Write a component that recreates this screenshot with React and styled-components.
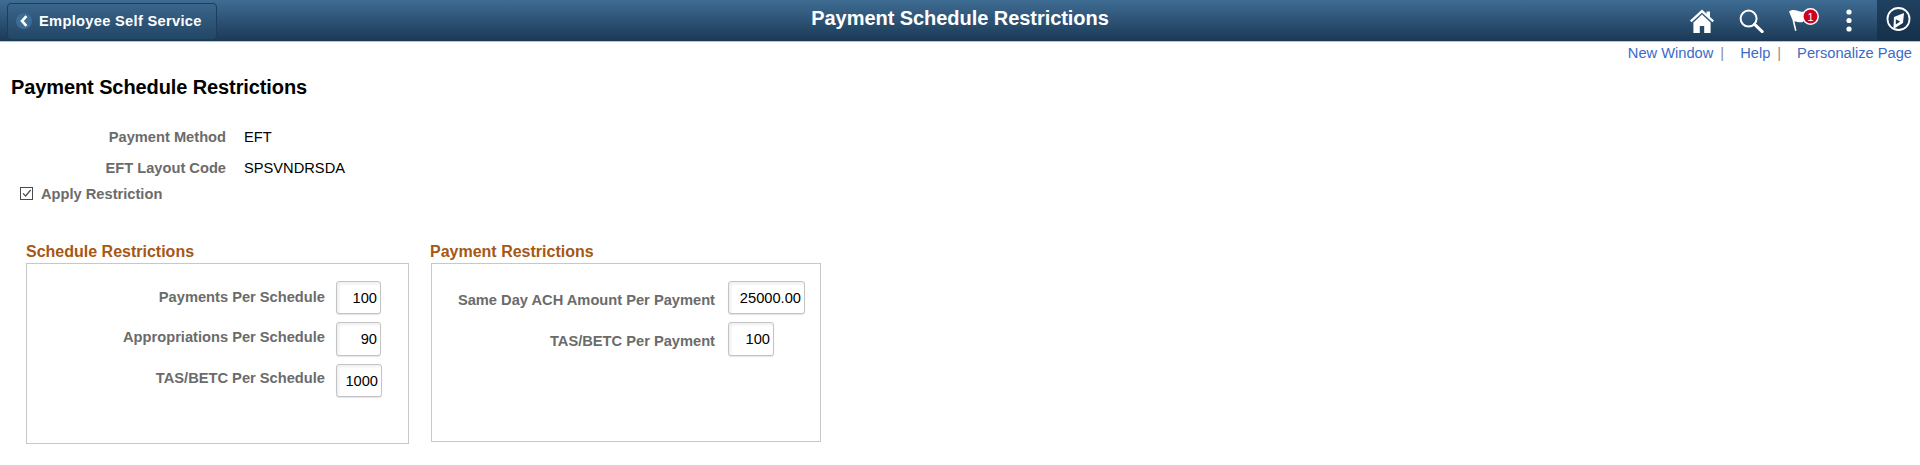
import React from "react";
import styled, { createGlobalStyle } from "styled-components";

const GlobalStyle = createGlobalStyle`
  html, body {
    margin: 0;
    padding: 0;
    background: #fff;
    font-family: "Liberation Sans", Arial, sans-serif;
  }
`;

const Banner = styled.header`
  display: flex;
  align-items: stretch;
  justify-content: space-between;
  position: relative;
  height: 41px;
  box-sizing: content-box;
  background: linear-gradient(#3f6c93, #1b3956);
  border-bottom: 1px solid #a9c6dc;
`;

const BackButton = styled.div`
  display: flex;
  align-items: center;
  box-sizing: border-box;
  width: 210px;
  height: 37px;
  margin: 3px 0 0 7px;
  padding: 0 0 2px 8px;
  gap: 7px;
  color: #fff;
  font-size: 14.67px;
  font-weight: 700;
  letter-spacing: 0.3px;
  border: 1px solid #1d3d5a;
  border-radius: 4px;
  background: linear-gradient(#3a658b, #234665);
`;

const BackBullet = styled.span`
  display: flex;
  align-items: center;
  justify-content: center;
  width: 16px;
  height: 16px;
  border-radius: 50%;
  background: #3c6d96;
`;

const BannerTitle = styled.div`
  position: absolute;
  left: 0;
  right: 0;
  top: 7px;
  text-align: center;
  color: #fff;
  font-size: 20px;
  font-weight: 700;
  line-height: 23px;
  letter-spacing: -0.05px;
  pointer-events: none;
`;

const BannerIcons = styled.div`
  display: flex;
  align-items: flex-start;
`;

const IconSlot = styled.span`
  display: block;
  box-sizing: border-box;
  width: ${(p) => p.$width}px;
  height: 41px;
  padding-top: ${(p) => p.$top}px;
`;

const NavBarButton = styled.span`
  display: block;
  width: 43px;
  height: 41px;
  border-radius: 0 0 0 4px;
  background: linear-gradient(#1f4160, #15304a);
`;

const TopLinks = styled.nav`
  display: flex;
  justify-content: flex-end;
  height: 22px;
  padding: 1px 8px 0 0;
  font-size: 14.67px;
  line-height: 21px;
  color: #3a6bc9;
`;

const TopLink = styled.a`
  color: #3a6bc9;
  margin-left: ${(p) => p.$gap}px;
`;

const Pipe = styled.span`
  color: #8d8d8d;
  margin-left: 7px;
`;

const Content = styled.main`
  padding: 11px 0 0 11px;
`;

const PageTitle = styled.h1`
  margin: 0;
  font-size: 20px;
  line-height: 23px;
  font-weight: 700;
  letter-spacing: -0.1px;
  color: #000;
`;

const InfoList = styled.div`
  margin-top: 30px;
`;

const InfoRow = styled.div`
  display: flex;
  height: 31px;
  font-size: 14.67px;
  line-height: 17px;
`;

const InfoLabel = styled.span`
  width: 215px;
  text-align: right;
  font-weight: 700;
  color: #6b6b6b;
`;

const InfoValue = styled.span`
  margin-left: 18px;
  color: #000;
`;

const ApplyRow = styled.label`
  display: flex;
  align-items: center;
  gap: 8px;
  margin: -6px 0 0 9px;
  height: 17px;
  font-size: 14.67px;
  font-weight: 700;
  color: #6b6b6b;
`;

const CheckBox = styled.span`
  display: flex;
  width: 13px;
  height: 13px;
`;

const Groups = styled.div`
  display: flex;
  align-items: flex-start;
  margin: 41px 0 0 15px;
`;

const Group = styled.section`
  width: ${(p) => p.$width}px;
  margin-right: ${(p) => p.$gap || 0}px;
`;

const GroupTitle = styled.h2`
  margin: 0 0 2px ${(p) => p.$shift || 0}px;
  font-size: 16px;
  line-height: 18px;
  font-weight: 700;
  color: #a65714;
`;

const GroupBox = styled.div`
  box-sizing: border-box;
  height: ${(p) => p.$height}px;
  padding-top: 17px;
  border: 1px solid #c8c8c8;
  display: flex;
  flex-direction: column;
  gap: 8px;
`;

const FieldRow = styled.div`
  display: flex;
  align-items: flex-start;
`;

const FieldLabel = styled.label`
  width: ${(p) => p.$width}px;
  padding-top: ${(p) => p.$top}px;
  text-align: right;
  font-size: 14.67px;
  line-height: 17px;
  font-weight: 700;
  color: #6b6b6b;
`;

const FieldInput = styled.input`
  box-sizing: border-box;
  width: ${(p) => p.$width}px;
  height: ${(p) => p.$height}px;
  margin-left: ${(p) => p.$gap}px;
  padding: 0 3px 0 0;
  text-align: right;
  font-family: inherit;
  font-size: 14.67px;
  color: #000;
  background: #fff;
  border: 1px solid #c4c4c4;
  border-radius: 3px;
  box-shadow: inset 2px 2px 3px #efefef, 0 1px 1px #e4e4e4;
  outline: none;
`;

const HomeIcon = () => (
  <svg width="24" height="24" viewBox="0 0 24 24">
    <path d="M12 .6 0 11.6l1.5 1.6L12 3.700l10.500 9.500 1.500-1.600-4-3.700V2.400h-3.400v2.400z" fill="#fff" />
    <path d="M12 5.600 3.400 13.400V24h6.400v-7h4.400v7h6.400V13.400z" fill="#fff" />
  </svg>
);

const SearchIcon = () => (
  <svg width="25" height="24" viewBox="0 0 25 24">
    <circle cx="9.600" cy="9.600" r="8" fill="none" stroke="#fff" strokeWidth="2" />
    <path d="m15.600 15.400 7.600 7.200" stroke="#fff" strokeWidth="3" strokeLinecap="round" />
  </svg>
);

const FlagIcon = () => (
  <svg width="31" height="26" viewBox="0 0 31 26">
    <path d="M0 3.400C4 .8 7.600 2.400 11 3.400c2.400.7 4.400.6 6.400-.2-.4 4.200-1.600 7.800-3.400 10.800-3.200 1-5.800-.4-8.600-.4L7.600 22.600 6 23 3.400 11.800z" fill="#fff" />
    <circle cx="21.500" cy="8.500" r="8.400" fill="#fff" />
    <circle cx="21.500" cy="8.500" r="6.900" fill="#d0021b" />
    <text x="21.500" y="12.500" textAnchor="middle" fontSize="11" fontFamily="Liberation Sans, sans-serif" fill="#fff">1</text>
  </svg>
);

const DotsIcon = () => (
  <svg width="6" height="24" viewBox="0 0 6 24">
    <circle cx="3" cy="3" r="2.600" fill="#fff" />
    <circle cx="3" cy="11.500" r="2.600" fill="#fff" />
    <circle cx="3" cy="20" r="2.600" fill="#fff" />
  </svg>
);

const CompassIcon = () => (
  <svg width="43" height="41" viewBox="0 0 43 41">
    <circle cx="21.500" cy="19" r="11" fill="none" stroke="#fff" strokeWidth="1.800" />
    <path d="M27 13 17 17l-.6 12 9.600-6z" fill="#fff" />
    <path d="M18.800 19.200v5.400l4.400-3z" fill="#1d3a54" />
  </svg>
);

const BackChevron = () => (
  <svg width="8" height="12" viewBox="0 0 8 12">
    <path d="M6.400 1.200 2 6l4.400 4.800" fill="none" stroke="#fff" strokeWidth="2.600" />
  </svg>
);

const CheckMark = () => (
  <svg width="13" height="13" viewBox="0 0 13 13">
    <rect x=".5" y=".5" width="12" height="12" fill="#fff" stroke="#4a4a4a" />
    <path d="m3 6.300 2.600 2.700L10.600 3" fill="none" stroke="#4a4a4a" strokeWidth="1.200" />
  </svg>
);

const scheduleFields = [
  { label: "Payments Per Schedule", value: "100", width: 45, height: 33, top: 8 },
  { label: "Appropriations Per Schedule", value: "90", width: 45, height: 34, top: 7 },
  { label: "TAS/BETC Per Schedule", value: "1000", width: 46, height: 33, top: 6 },
];

const paymentFields = [
  { label: "Same Day ACH Amount Per Payment", value: "25000.00", width: 77, height: 33, top: 11 },
  { label: "TAS/BETC Per Payment", value: "100", width: 46, height: 34, top: 11 },
];

const FieldGroup = ({ title, fields, width, height, labelWidth, inputGap, gap, shift }) => (
  <Group $width={width} $gap={gap}>
    <GroupTitle $shift={shift}>{title}</GroupTitle>
    <GroupBox $height={height}>
      {fields.map((f) => (
        <FieldRow key={f.label}>
          <FieldLabel $width={labelWidth} $top={f.top}>{f.label}</FieldLabel>
          <FieldInput $width={f.width} $height={f.height} $gap={inputGap} defaultValue={f.value} readOnly />
        </FieldRow>
      ))}
    </GroupBox>
  </Group>
);

const App = () => (
  <>
    <GlobalStyle />
    <Banner>
      <BackButton>
        <BackBullet><BackChevron /></BackBullet>
        Employee Self Service
      </BackButton>
      <BannerTitle>Payment Schedule Restrictions</BannerTitle>
      <BannerIcons>
        <IconSlot $width={49} $top={9}><HomeIcon /></IconSlot>
        <IconSlot $width={50} $top={9}><SearchIcon /></IconSlot>
        <IconSlot $width={57} $top={8}><FlagIcon /></IconSlot>
        <IconSlot $width={31} $top={9}><DotsIcon /></IconSlot>
        <NavBarButton><CompassIcon /></NavBarButton>
      </BannerIcons>
    </Banner>
    <TopLinks>
      <TopLink>New Window</TopLink>
      <Pipe>|</Pipe>
      <TopLink $gap={16}>Help</TopLink>
      <Pipe>|</Pipe>
      <TopLink $gap={16}>Personalize Page</TopLink>
    </TopLinks>
    <Content>
      <PageTitle>Payment Schedule Restrictions</PageTitle>
      <InfoList>
        <InfoRow>
          <InfoLabel>Payment Method</InfoLabel>
          <InfoValue>EFT</InfoValue>
        </InfoRow>
        <InfoRow>
          <InfoLabel>EFT Layout Code</InfoLabel>
          <InfoValue>SPSVNDRSDA</InfoValue>
        </InfoRow>
      </InfoList>
      <ApplyRow>
        <CheckBox><CheckMark /></CheckBox>
        Apply Restriction
      </ApplyRow>
      <Groups>
        <FieldGroup
          title="Schedule Restrictions"
          fields={scheduleFields}
          width={383}
          height={181}
          labelWidth={298}
          inputGap={11}
          gap={22}
        />
        <FieldGroup
          title="Payment Restrictions"
          fields={paymentFields}
          width={390}
          height={179}
          labelWidth={283}
          inputGap={13}
          shift={-1}
        />
      </Groups>
    </Content>
  </>
);

export default App;
